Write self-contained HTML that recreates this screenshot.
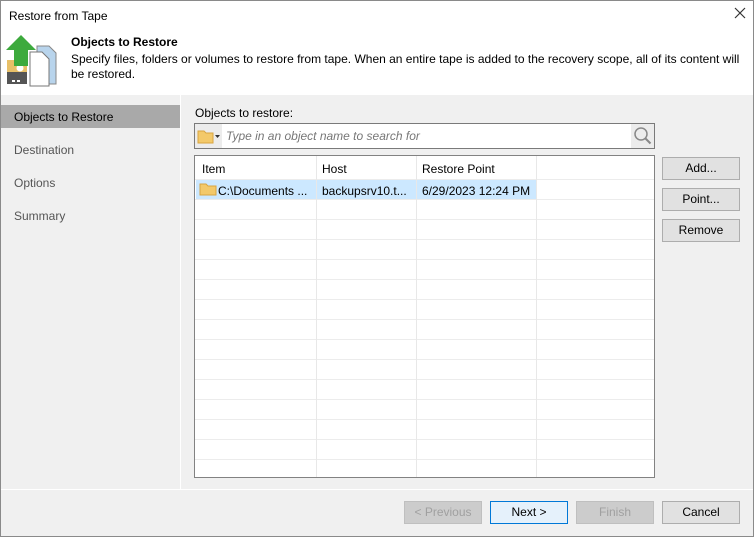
<!DOCTYPE html>
<html><head><style>
*{box-sizing:border-box;margin:0;padding:0}
body{width:754px;height:537px;overflow:hidden;font-family:"Liberation Sans",sans-serif;font-size:12px;color:#000;background:#fff;position:relative}
.abs{position:absolute}
.win{position:absolute;left:0;top:0;width:754px;height:537px;border:1px solid #8a8a8a}
.btn{position:absolute;height:23px;width:78px;border:1px solid #adadad;background:#e1e1e1;text-align:center;line-height:21px;font-size:12px}
.dis{color:#a0a0a0;background:#cccccc;border-color:#bfbfbf}
.vl{position:absolute;top:156px;width:1px;height:321px;background:#e8e8e8}
.hl{position:absolute;left:195px;width:459px;height:1px;background:#ececec}
</style></head><body>
<div class="abs" style="left:0;top:95px;width:754px;height:442px;background:#f0f0f0"></div>
<div class="abs" style="left:180px;top:95px;width:1px;height:394px;background:#fff"></div>
<div class="abs" style="left:0;top:489px;width:754px;height:1px;background:#fff"></div>
<div class="abs" style="left:9px;top:9px;font-size:12px">Restore from Tape</div>
<svg class="abs" style="left:734px;top:7px" width="12" height="12"><path d="M1 1l10 10M11 1l-10 10" stroke="#333" stroke-width="1.2"/></svg>
<svg class="abs" style="left:4px;top:34px" width="58" height="54">
<rect x="3" y="26" width="20" height="24" fill="#e8c068"/>
<rect x="3" y="38" width="20" height="12" fill="#555"/>
<circle cx="16" cy="34" r="3.5" fill="#fff"/>
<rect x="8" y="46" width="3" height="2" fill="#fff"/><rect x="13" y="46" width="3" height="2" fill="#fff"/>
<path d="M33 12h12l7 7v31h-19z" fill="#b8d4ec" stroke="#888"/>
<path d="M26 18h12l7 7v27h-19z" fill="#fff" stroke="#777"/>
<path d="M17 1l15 15h-8v16h-14v-16h-8z" fill="#3daa3d"/>
</svg>
<div class="abs" style="left:71px;top:35px;font-weight:bold;font-size:12px">Objects to Restore</div>
<div class="abs" style="left:71px;top:52px;width:670px;line-height:15px">Specify files, folders or volumes to restore from tape. When an entire tape is added to the recovery scope, all of its content will be restored.</div>
<div class="abs" style="left:0;top:105px;width:180px;height:23px;background:#a9a9a9"></div>
<div class="abs" style="left:14px;top:110px">Objects to Restore</div>
<div class="abs" style="left:14px;top:143px;color:#555">Destination</div>
<div class="abs" style="left:14px;top:176px;color:#555">Options</div>
<div class="abs" style="left:14px;top:209px;color:#555">Summary</div>
<div class="abs" style="left:195px;top:106px">Objects to restore:</div>
<div class="abs" style="left:194px;top:123px;width:461px;height:26px;border:1px solid #7a7a7a;background:#fff"></div>
<div class="abs" style="left:195px;top:124px;width:27px;height:24px;background:#ececec"></div>
<svg class="abs" style="left:197px;top:128px" width="24" height="16"><path d="M1 3h6l2 2h7v10h-15z" fill="#f3c96a" stroke="#d9a540"/><path d="M18 7h5l-2.5 3z" fill="#333"/></svg>
<div class="abs" style="left:226px;top:129px;font-style:italic;color:#777">Type in an object name to search for</div>
<div class="abs" style="left:631px;top:124px;width:23px;height:24px;background:#ececec"></div>
<svg class="abs" style="left:633px;top:126px" width="20" height="20"><circle cx="8" cy="8" r="6" fill="none" stroke="#888" stroke-width="1.5"/><path d="M12.5 12.5l5 5" stroke="#888" stroke-width="2"/></svg>
<div class="abs" style="left:194px;top:155px;width:461px;height:323px;border:1px solid #828282;background:#fff"></div>
<div class="abs" style="left:196px;top:180px;width:340px;height:19px;background:#cce8ff"></div>
<div class="hl" style="top:179px"></div>
<div class="hl" style="top:199px"></div><div class="hl" style="top:219px"></div><div class="hl" style="top:239px"></div><div class="hl" style="top:259px"></div><div class="hl" style="top:279px"></div><div class="hl" style="top:299px"></div><div class="hl" style="top:319px"></div><div class="hl" style="top:339px"></div><div class="hl" style="top:359px"></div><div class="hl" style="top:379px"></div><div class="hl" style="top:399px"></div><div class="hl" style="top:419px"></div><div class="hl" style="top:439px"></div><div class="hl" style="top:459px"></div>
<div class="vl" style="left:316px"></div><div class="vl" style="left:416px"></div><div class="vl" style="left:536px"></div>
<div class="abs" style="left:202px;top:162px">Item</div>
<div class="abs" style="left:322px;top:162px">Host</div>
<div class="abs" style="left:422px;top:162px">Restore Point</div>
<svg class="abs" style="left:199px;top:182px" width="18" height="14"><path d="M1 2h6l2 2h8v9h-16z" fill="#f3c96a" stroke="#d9a540"/></svg>
<div class="abs" style="left:218px;top:184px">C:\Documents ...</div>
<div class="abs" style="left:322px;top:184px">backupsrv10.t...</div>
<div class="abs" style="left:422px;top:184px">6/29/2023 12:24 PM</div>
<div class="btn" style="left:662px;top:157px">Add...</div>
<div class="btn" style="left:662px;top:188px">Point...</div>
<div class="btn" style="left:662px;top:219px">Remove</div>
<div class="btn dis" style="left:404px;top:501px">&lt; Previous</div>
<div class="btn" style="left:490px;top:501px;background:#e5f1fb;border-color:#0078d7">Next &gt;</div>
<div class="btn dis" style="left:576px;top:501px">Finish</div>
<div class="btn" style="left:662px;top:501px">Cancel</div>
<div class="win"></div>
</body></html>
